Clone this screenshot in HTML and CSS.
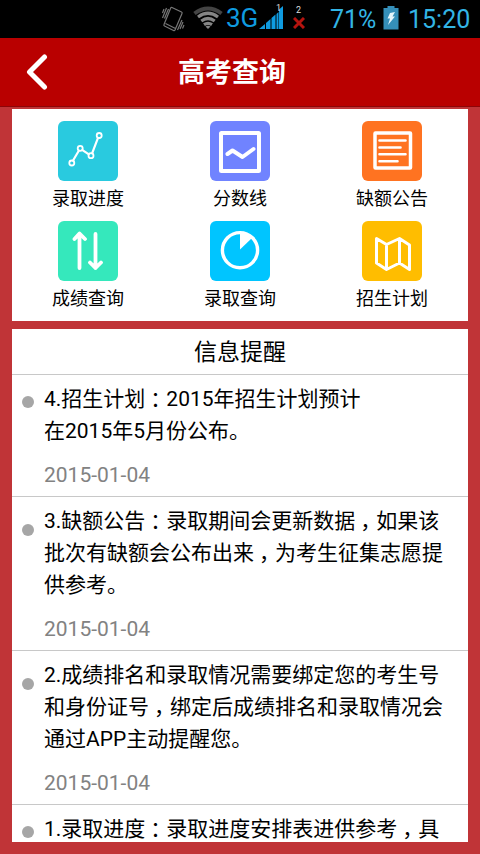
FILE: index.html
```html
<!DOCTYPE html>
<html lang="zh-CN">
<head>
<meta charset="utf-8">
<title>高考查询</title>
<link rel="stylesheet" href="styles.css">
</head>
<body>
<div class="status">
  <svg class="vibrate" width="24" height="30" viewBox="0 0 24 30" fill="none" stroke="#777" stroke-width="1.2"><path d="M11 3.500L20.500 8Q21.500 8.500 21 9.500L14 26Q13.500 27 12.500 26.500L3.500 22Q2.500 21.500 3 20.500L9.500 4.500Q10 3 11 3.500ZM4.500 19.500L14.500 24.500M1.500 14L5.500 4M3.500 14.500L7.500 5M1.500 9L3 5M16.500 26L21 16M19 25L22 18M21.500 24.500L23 21"/></svg>
  <svg class="wifi" width="32" height="26" viewBox="0 0 32 26" fill="none"><path d="M2.500 8.500Q16-1.500 29.500 8.500" stroke="#444" stroke-width="4"/><path d="M6 12Q16 4.500 26 12M9.300 16Q16 11 22.700 16M12 19.700Q16 17 20 19.700" stroke="#858585" stroke-width="3.200"/><path d="M13.500 21.500Q16 20 18.500 21.500L16 24Z" fill="#858585"/></svg>
  <span class="net">3G</span>
  <svg class="signal" width="26" height="26" viewBox="0 0 26 26" fill="#0f9be0"><path d="M0 25L6 20V25ZM7 19L11.500 15V25H7ZM12.500 14L16.500 10.500V25H12.500ZM17.500 10L19.500 8V25H17.500ZM20 5.500L24 2V25H20Z"/></svg>
  <span class="sim sim-one">1</span>
  <span class="sim sim-two">2</span>
  <svg class="cross" width="12" height="12" viewBox="0 0 12 12" stroke="#b5140f" stroke-width="3"><path d="M1 1L11 11M11 1L1 11"/></svg>
  <span class="percent">71%</span>
  <svg class="battery" width="16" height="24" viewBox="0 0 16 24"><path d="M4.500 0H11.500V2H15.500V23.500H.5V2H4.500Z" fill="#358fb9"/><path d="M7 7L12 6L9.500 10.500H12L5 19L7 12.500H4.500Z" fill="#e5f5fb"/></svg>
  <span class="clock">15:20</span>
</div>
<header class="bar">
  <svg class="back" width="22" height="36" viewBox="0 0 22 36" fill="none" stroke="#fff" stroke-width="5" stroke-linecap="round" stroke-linejoin="round"><path d="M18.500 3L3.500 18L18.500 33"/></svg>
  <h1>高考查询</h1>
</header>
<main>
  <nav class="grid">
    <a class="tile"><svg class="cyan" viewBox="0 0 60 60"><path d="M15.200 39.200L20.800 29.800M24.500 29.200L30.500 33.200M34.200 32.200L39.800 17.300" stroke-width="2.200"/><g stroke-width="1.800"><circle cx="13.800" cy="42" r="2.500"/><circle cx="22.200" cy="27.300" r="2.500"/><circle cx="33" cy="34.700" r="2.500"/><circle cx="41.200" cy="14.500" r="2.500"/></g></svg>录取进度</a>
    <a class="tile"><svg class="violet" viewBox="0 0 60 60"><rect x="11" y="12" width="38" height="38" rx=".5" stroke-width="4"/><path d="M17.500 33L22.500 29.500L32.500 36L43.500 28" stroke-width="4"/></svg>分数线</a>
    <a class="tile"><svg class="orange" viewBox="0 0 60 60"><rect x="13" y="12" width="35.500" height="35" rx=".5" stroke-width="3.500"/><path d="M17.500 19.500H43.500M17.500 26.500H38.500M17.500 33.300H43.500M17.500 40.300H35.500" stroke-width="2.600"/></svg>缺额公告</a>
    <a class="tile"><svg class="green" viewBox="0 0 60 60"><path d="M21.500 47V13M16.500 18L21.500 12.500L27 18M37.500 13V47M32 41.500L37.500 47L43 41.500" stroke-width="3.800"/></svg>成绩查询</a>
    <a class="tile"><svg class="blue" viewBox="0 0 60 60"><circle cx="30" cy="29.200" r="17.600" stroke-width="3.400"/><path d="M30 28.500V12.500Q36.500 12.500 42 17Z" fill="#fff" stroke="none"/></svg>录取查询</a>
    <a class="tile"><svg class="amber" viewBox="0 0 60 60"><path d="M14.500 17.500L24.500 23.500L37.500 17.500L47.500 24V48.500L37.500 42L24.500 48.500L14.500 42ZM24.500 23.500V48M37.500 18V42" stroke-width="3"/></svg>招生计划</a>
  </nav>
  <section class="news">
    <h2>信息提醒</h2>
    <article class="item">
      <i class="dot"></i>
      <p>4.招生计划<span class="mark">：</span>2015年招生计划预计<br>在2015年5月份公布。</p>
      <time>2015-01-04</time>
    </article>
    <article class="item low">
      <i class="dot"></i>
      <p>3.缺额公告<span class="mark">：</span>录取期间会更新数据<span class="mark">，</span>如果该<br>批次有缺额会公布出来<span class="mark">，</span>为考生征集志愿提<br>供参考。</p>
      <time>2015-01-04</time>
    </article>
    <article class="item low">
      <i class="dot"></i>
      <p>2.成绩排名和录取情况需要绑定您的考生号<br>和身份证号<span class="mark">，</span>绑定后成绩排名和录取情况会<br>通过APP主动提醒您。</p>
      <time>2015-01-04</time>
    </article>
    <article class="item">
      <i class="dot"></i>
      <p>1.录取进度<span class="mark">：</span>录取进度安排表进供参考<span class="mark">，</span>具</p>
    </article>
  </section>
</main>
</body>
</html>
```
FILE: styles.css
```css
* { box-sizing: border-box; }

body {
  margin: 0;
  width: 480px;
  height: 854px;
  overflow: hidden;
  display: flex;
  flex-direction: column;
  background: #c03437;
  color: #000;
  font-family: Roboto, "Noto Sans CJK SC", sans-serif;
}

.status {
  height: 38px;
  flex: none;
  display: flex;
  align-items: flex-start;
  padding-left: 161px;
  background: #000;
  color: #33b5e5;
  font-size: 25px;
  line-height: 39px;
  white-space: nowrap;
}
.status svg { flex: none; }
.vibrate { margin-top: 4px; }
.wifi { margin: 5px 0 0 7px; }
.net { width: 33px; margin-left: 2px; color: #0f9be0; font-size: 26px; line-height: 37px; }
.signal { margin-top: 4px; }
.sim { width: 8px; color: #ddd; font-size: 9px; line-height: 17px; }
.sim-one { margin-left: -9px; }
.sim-two { margin: 2px 0 0 12px; }
.cross { margin: 17px 0 0 -11px; }
.percent { width: 53px; margin-left: 25px; }
.battery { margin-top: 6px; }
.clock { margin-left: 9px; }

.bar {
  height: 69px;
  flex: none;
  display: grid;
  grid-template-columns: 60px 1fr 60px;
  align-items: center;
  background: #b90000;
  border-bottom: 1px solid #8c0508;
}
.back { margin-left: 26px; }
h1 {
  margin: 0;
  padding: 1px 16px 0 0;
  color: #fff;
  font-size: 27px;
  line-height: 40px;
  font-weight: 700;
  text-align: center;
}

main {
  flex: 1;
  min-height: 0;
  display: flex;
  flex-direction: column;
  gap: 8px;
  padding: 2px 12px 12px;
}

.grid {
  height: 212px;
  flex: none;
  display: grid;
  grid-template-columns: repeat(3, 1fr);
  grid-auto-rows: 100px;
  padding-top: 12px;
  background: #fff;
}
.tile {
  display: flex;
  flex-direction: column;
  align-items: center;
  font-size: 18px;
  line-height: 35px;
}
.tile svg {
  flex: none;
  width: 60px;
  height: 60px;
  border-radius: 6px;
  fill: none;
  stroke: #fff;
  stroke-linecap: round;
  stroke-linejoin: round;
}
.cyan { background: #29cadf; }
.violet { background: #7083ff; }
.orange { background: #ff7321; }
.green { background: #35e8bc; }
.blue { background: #00c5ff; }
.amber { background: #ffbd00; }

.news {
  flex: 1;
  min-height: 0;
  overflow: hidden;
  background: #fff;
}
h2 {
  height: 45px;
  margin: 0;
  font-size: 23px;
  font-weight: 400;
  line-height: 47px;
  text-align: center;
}
.item {
  display: grid;
  grid-template-columns: 12px 1fr;
  column-gap: 10px;
  padding: 8px 0 5px 10px;
  border-top: 1px solid #c8c8c8;
}
.dot {
  width: 12px;
  height: 12px;
  margin-top: 13px;
  border-radius: 50%;
  background: #a6a6a6;
}
.low .dot { margin-top: 19px; }
.item p {
  margin: 0;
  font-size: 21px;
  line-height: 32px;
  white-space: nowrap;
}
/* half-width punctuation, centred in a full-width cell */
.mark {
  padding: 0 5.500px 0 5px;
  font-feature-settings: "halt";
}
time {
  grid-column: 2;
  margin-top: 12px;
  color: #828282;
  font-size: 21px;
  line-height: 32px;
}
```
